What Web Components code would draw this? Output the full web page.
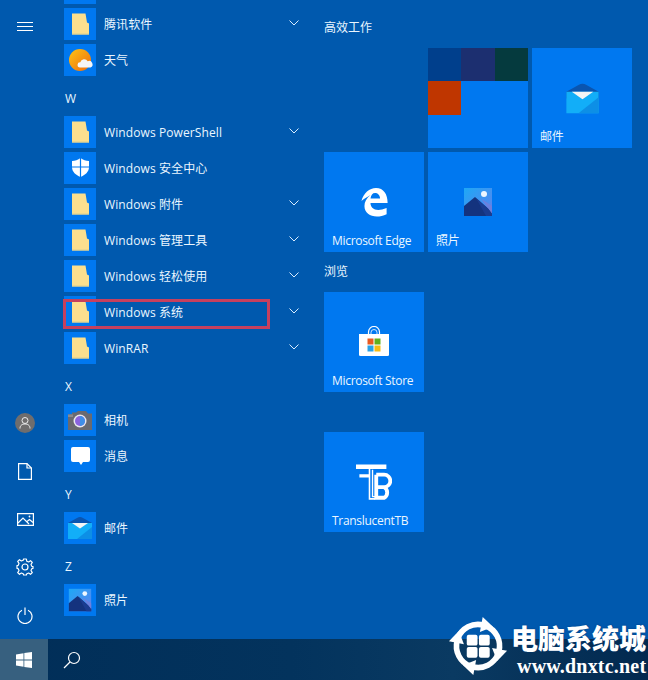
<!DOCTYPE html>
<html lang="zh">
<head>
<meta charset="utf-8">
<title>Start</title>
<style>
  html, body { margin: 0; height: 100%; overflow: hidden; }
  body {
    position: relative;
    display: flex;
    flex-direction: column;
    background: #0059ae;
    color: #eaf6ff;
    font: 12px "Open Sans", "Noto Sans CJK SC", sans-serif;
  }
  .menu { display: flex; height: 639px; }
  .tiles { padding-top: 8px; }
</style>
</head>
<body>
  <div class="menu">
    <sm-rail></sm-rail>
    <app-list>
      <div style="width:32px;height:4px;background:#0078f0;margin-bottom:4px"></div>
      <app-row icon="folder" more>腾讯软件</app-row>
      <app-row icon="weather">天气</app-row>
      <letter-head>W</letter-head>
      <app-row icon="folder" more>Windows PowerShell</app-row>
      <app-row icon="shield">Windows 安全中心</app-row>
      <app-row icon="folder" more>Windows 附件</app-row>
      <app-row icon="folder" more>Windows 管理工具</app-row>
      <app-row icon="folder" more>Windows 轻松使用</app-row>
      <app-row icon="folder" more marked>Windows 系统</app-row>
      <app-row icon="folder" more>WinRAR</app-row>
      <letter-head>X</letter-head>
      <app-row icon="camera">相机</app-row>
      <app-row icon="message">消息</app-row>
      <letter-head>Y</letter-head>
      <app-row icon="mail">邮件</app-row>
      <letter-head>Z</letter-head>
      <app-row icon="photos">照片</app-row>
    </app-list>
    <div class="tiles">
      <tile-group title="高效工作">
        <live-tile mosaic style="grid-column:2"></live-tile>
        <live-tile icon="mail" size="43" label="邮件"></live-tile>
        <live-tile icon="edge" size="31" label="Microsoft Edge"></live-tile>
        <live-tile icon="photos" size="40" label="照片"></live-tile>
      </tile-group>
      <tile-group title="浏览">
        <live-tile icon="store" size="32" label="Microsoft Store"></live-tile>
      </tile-group>
      <tile-group>
        <live-tile icon="tb" size="36" label="TranslucentTB"></live-tile>
      </tile-group>
    </div>
  </div>
  <task-bar></task-bar>
  <site-mark></site-mark>

<script>
(() => {
  // every icon is drawn on a 32x32 box, so rows and tiles can share them
  const icons = {
    folder: `<path d="M8 5.500H21.500L23 14.500L25 15.500V26.500H8Z" fill="#fbdf8e"/><path d="M8 25.500H25V26.500H8Z" fill="#d8cf92"/>`,
    weather: `<defs><linearGradient id="sun" x1="0" y1="0" x2="1" y2="1"><stop offset="0" stop-color="#fdc414"/><stop offset="1" stop-color="#ee6a0e"/></linearGradient></defs>
      <circle cx="16" cy="16" r="11" fill="url(#sun)"/>
      <path d="M16 23.500a2.600 2.600 0 0 1 .3-5.200 4 4 0 0 1 7.400-1 3.100 3.100 0 0 1 2.800 6.200Z" fill="#f4f6f8"/>`,
    shield: `<path d="M16.500 6C14 8 11 9 8 9V15C8 20 12 23 16.500 25C21 23 25 20 25 15V9C22 9 19 8 16.500 6Z" fill="#fff"/><path d="M16.500 6V25M8 15H25" stroke="#0078f0" stroke-width="1.200"/>`,
    camera: `<path d="M4 10.500L8 10V8.500H12L14 7H22L24 9.500H28V26H4Z" fill="#6a6a70"/><path d="M4 10.500H9V13H4Z" fill="#8a8a90"/>
      <circle cx="16" cy="17" r="6.500" fill="#e8e8f0"/><circle cx="16" cy="17" r="5" fill="#8a63e0"/><path d="M16 12a5 5 0 0 1 0 10Z" fill="#3f8fe8"/>`,
    message: `<path d="M9 7H24Q26 7 26 9V20Q26 22 24 22H19L17 25L15 22H9Q7 22 7 20V9Q7 7 9 7Z" fill="#fff"/>`,
    mail: `<path d="M4 11L13 6Q16 4 19 6L28 11V16H4Z" fill="#0a55b0"/><path d="M4 11H28V27H4Z" fill="#12aef8"/><path d="M28 27H13L28 15Z" fill="#0d8fe6"/><path d="M8 11H24L16 16.500Z" fill="#f5f5f5"/>`,
    photos: `<defs><linearGradient id="sky" x1="0" y1="0" x2="1" y2="1"><stop offset="0" stop-color="#1ea8f6"/><stop offset=".7" stop-color="#4a8df0"/><stop offset="1" stop-color="#7d6fe0"/></linearGradient></defs>
      <g transform="translate(16 16) scale(.8) translate(-16 -16)">
      <path d="M2 2H30V30H2Z" fill="url(#sky)"/><circle cx="22" cy="8" r="3" fill="#eef7ff"/>
      <path d="M2 30V20L13 11L30 26V30Z" fill="#14337e"/><path d="M19 12.500L30 20V28Z" fill="#6f7fdc" opacity=".9"/><path d="M14 12L26 22.500L30 28V30H24Z" fill="#1a3c90"/></g>`,
    edge: `<path transform="translate(2.500 1) scale(1.040)" fill="#fff" fill-rule="evenodd" d="M0 13C2 5 8 0 14.500 0C22 0 26 6 26 15H9C9 21 15 24 25 20V26C15 31 3 28 3 18C3 14 5 10 9 7C6 9 2 11 0 13ZM9 10.500H18.500C18.500 7 16 5 13.500 5C11 5 9.500 7 9 10.500Z"/>`,
    store: `<path d="M10.500 9V6a5.500 5.500 0 0 1 11 0V9" fill="none" stroke="#fff" stroke-width="1.200"/><path d="M13 9V6.500a3 3 0 0 1 6 0V9" fill="none" stroke="#fff" stroke-width=".800"/>
      <path d="M1 8H31V29Q31 30 29.500 30H2.500Q1 30 1 29Z" fill="#fff"/>
      <path d="M9.500 12.500H15.500V18.500H9.500Z" fill="#ea5a20"/><path d="M16.500 12.500H22.500V18.500H16.500Z" fill="#62b01c"/><path d="M9.500 19.500H15.500V25.500H9.500Z" fill="#2aa2e6"/><path d="M16.500 19.500H22.500V25.500H16.500Z" fill="#f8bc14"/>`,
    tb: `<path d="M0 .5H27V4.500H0ZM3 9H12V12H3Z" fill="#fff"/><path d="M12 4.500V31H17" fill="none" stroke="#fff" stroke-width="1.400"/><path d="M14.700 5V29H17" fill="none" stroke="#fff" stroke-width="1.200"/>
      <path d="M18 9.500H25a5.500 5.500 0 0 1 0 11H18M25 20.500a5.500 5.500 0 0 1 0 9.500H18V9.500" fill="none" stroke="#fff" stroke-width="3.400"/>`
  };

  const svg = (name, size) => `<svg width="${size}" height="${size}" viewBox="0 0 32 32">${icons[name]}</svg>`;


  // ****************************************************************************


  customElements.define('sm-rail',
    /**
     * The narrow column at the far left of the menu
     */
    class SmRail extends HTMLElement {
      constructor () {
        super();
        const line = 'fill="none" stroke="#fff" stroke-width="1.200"';
        this.attachShadow({ mode: 'open' }).innerHTML = `
          <style>
            :host { display: flex; flex-direction: column; justify-content: space-between; width: 48px; flex: none; }
            .top { padding-top: 3px; }
            .btn { display: flex; width: 50px; height: 48px; align-items: center; justify-content: center; }
            svg { display: block; }
          </style>
          <div class="top">
            <div class="btn"><svg width="16" height="10" viewBox="0 0 16 10"><path d="M0 .5H16M0 4.500H16M0 8.500H16" stroke="#fff"/></svg></div>
          </div>
          <div>
            <div class="btn"><svg width="22" height="22" viewBox="0 0 22 22"><circle cx="11" cy="11" r="10" fill="#6f6d6d"/><circle cx="11" cy="8.500" r="3" fill="none" stroke="#eee"/><path d="M6 16.500C6 13 8.500 12 11 12S16 13 16 16.500" fill="none" stroke="#eee"/></svg></div>
            <div class="btn"><svg width="14" height="17" viewBox="0 0 14 17"><path d="M.6.6H9L13.400 5V16.400H.6Z" ${line}/><path d="M9 .6V5H13.400" ${line} stroke-width="1"/></svg></div>
            <div class="btn"><svg width="17" height="13" viewBox="0 0 17 13"><path d="M.6.6H16.400V12.400H.6Z" ${line}/><path d="M1 10L6 5L12 11M10 8.500L12.500 6.500L16 9.500" ${line}/><circle cx="12.500" cy="3.500" r=".9" fill="#fff"/></svg></div>
            <div class="btn"><svg width="18" height="18" viewBox="0 0 18 18"><path d="M7.600 1H10.400L10.800 3.300L12.600 4L14.500 2.700L16.300 4.500L15 6.400L15.700 8.200L17 8.600V10.400L15.700 10.800L15 12.600L16.300 14.500L14.500 16.300L12.600 15L10.800 15.700L10.400 17H7.600L7.200 15.700L5.400 15L3.500 16.300L1.700 14.500L3 12.600L2.300 10.800L1 10.400V7.600L2.300 7.200L3 5.400L1.700 3.500L3.500 1.700L5.400 3L7.200 2.300Z" ${line} stroke-linejoin="round"/><circle cx="9" cy="9" r="3" ${line}/></svg></div>
            <div class="btn"><svg width="16" height="17" viewBox="0 0 16 17"><path d="M5 3.200A7 7 0 1 0 11 3.200" ${line}/><path d="M8 .5V8" ${line}/></svg></div>
          </div>
        `;
      }
    }
  );

  customElements.define('app-list',
    /**
     * Scrolled list of all apps
     */
    class AppList extends HTMLElement {
      constructor () {
        super();
        this.attachShadow({ mode: 'open' }).innerHTML = `
          <style>
            :host { display: block; box-sizing: border-box; width: 276px; flex: none; padding-left: 16px; }
          </style>
          <slot></slot>
        `;
      }
    }
  );

  customElements.define('letter-head',
    /**
     * Alphabet heading inside the list
     */
    class LetterHead extends HTMLElement {
      constructor () {
        super();
        this.attachShadow({ mode: 'open' }).innerHTML = `
          <style>
            :host { display: flex; height: 36px; align-items: center; padding-left: 1px; }
          </style>
          <slot></slot>
        `;
      }
    }
  );

  customElements.define('app-row',
    /**
     * One app in the list: icon, name and an optional chevron
     */
    class AppRow extends HTMLElement {
      constructor () {
        super();
        const more = this.hasAttribute('more')
          ? '<svg class="more" width="10" height="6" viewBox="0 0 10 6"><path d="M.5.5L5 5L9.500.5" fill="none" stroke="#d8ecff"/></svg>'
          : '';
        const mark = this.hasAttribute('marked') ? '<div class="mark"></div>' : '';
        this.attachShadow({ mode: 'open' }).innerHTML = `
          <style>
            :host { display: flex; position: relative; height: 32px; margin-bottom: 4px; align-items: center; letter-spacing: .1px; }
            .icon { width: 32px; height: 32px; margin-right: 8px; flex: none; background: #0078f0; }
            svg { display: block; }
            .more { margin-left: auto; margin-right: 25px; margin-top: -3px; }
            .mark { position: absolute; top: 3px; left: -1px; width: 201px; height: 24px; border: 3px solid #c6405e; }
          </style>
          <div class="icon">${svg(this.getAttribute('icon'), 32)}</div>
          <slot></slot>
          ${more}
          ${mark}
        `;
      }
    }
  );

  customElements.define('tile-group',
    /**
     * Titled block of tiles, three 100px columns
     */
    class TileGroup extends HTMLElement {
      constructor () {
        super();
        this.attachShadow({ mode: 'open' }).innerHTML = `
          <style>
            :host { display: block; }
            .head { height: 40px; box-sizing: border-box; padding-top: 11px; line-height: 18px; }
            .grid { display: grid; grid-template-columns: repeat(3, 100px); grid-auto-rows: 100px; gap: 4px; }
          </style>
          <div class="head">${this.getAttribute('title') || ''}</div>
          <div class="grid"><slot></slot></div>
        `;
      }
    }
  );

  customElements.define('live-tile',
    /**
     * A start tile, or the small folder mosaic when it has the mosaic attribute
     */
    class LiveTile extends HTMLElement {
      constructor () {
        super();
        const size = this.getAttribute('size');
        const inner = this.hasAttribute('mosaic')
          ? `<div class="mosaic"><i style="background:#003f8c"></i><i style="background:#1c2f70"></i><i style="background:#053a3e"></i><i style="background:#bf3600"></i></div>`
          : `${svg(this.getAttribute('icon'), size)}<span>${this.getAttribute('label')}</span>`;
        this.attachShadow({ mode: 'open' }).innerHTML = `
          <style>
            :host { display: grid; background: #0078f0; place-items: center; }
            svg { display: block; grid-area: 1 / 1; }
            span { grid-area: 1 / 1; align-self: end; justify-self: start; padding: 0 0 2px 8px; line-height: 18px; white-space: nowrap; letter-spacing: -.3px; }
            .mosaic { grid-area: 1 / 1; display: grid; width: 100%; height: 100%; grid-template-columns: repeat(3, 1fr); grid-template-rows: repeat(3, 1fr); }
          </style>
          ${inner}
        `;
      }
    }
  );

  customElements.define('task-bar',
    /**
     * Taskbar with start button and search
     */
    class TaskBar extends HTMLElement {
      constructor () {
        super();
        this.attachShadow({ mode: 'open' }).innerHTML = `
          <style>
            :host { display: flex; height: 41px; flex: none; background: linear-gradient(90deg, #012e58 0, #03335d 45%, #0a3a62 70%, #02294f 100%); }
            .start { display: flex; width: 48px; align-items: center; justify-content: center; background: #37607f; }
            .search { display: flex; width: 48px; align-items: center; justify-content: center; }
          </style>
          <div class="start"><svg width="16" height="16" viewBox="0 0 16 16"><path d="M0 2.400L7.500 1.200V7.600H0ZM8.300 1.100L16 0V7.600H8.300ZM0 8.400H7.500V14.800L0 13.600ZM8.300 8.400H16V16L8.300 14.900Z" fill="#fff"/></svg></div>
          <div class="search"><svg width="18" height="18" viewBox="0 0 18 18"><circle cx="11" cy="7" r="5.500" fill="none" stroke="#fff" stroke-width="1.200"/><path d="M7 11L1 17" stroke="#fff" stroke-width="1.300"/></svg></div>
        `;
      }
    }
  );

  customElements.define('site-mark',
    /**
     * Watermark of the source site, lies over the bottom right corner
     */
    class SiteMark extends HTMLElement {
      constructor () {
        super();
        const arc = `<path d="M10.400 24.100A23 23 0 0 1 38 9.800" fill="none" stroke="#fff" stroke-width="6"/><path d="M37 1L48 11.500L34 17Z" fill="#fff"/>`;
        this.attachShadow({ mode: 'open' }).innerHTML = `
          <style>
            :host { position: absolute; left: 448px; top: 614px; display: flex; width: 200px; height: 66px; color: #fff; }
            svg { display: block; flex: none; margin-right: 3px; }
            .text { display: flex; flex-direction: column; padding-top: 11px; white-space: nowrap; }
            .name { font: 900 27px/30px "Liberation Sans", "Noto Sans CJK SC", sans-serif; text-shadow: 0 0 2px #003a78; }
            .url { font: bold 20px/23px "Liberation Serif", serif; margin-left: 6px; letter-spacing: .2px; }
          </style>
          <svg width="60" height="64" viewBox="0 0 64 64">
            ${arc}
            <g transform="rotate(90 32 32)">${arc}</g>
            <g transform="rotate(180 32 32)">${arc}</g>
            <g transform="rotate(270 32 32)">${arc}</g>
            <rect x="20" y="20" width="11.500" height="11.500" rx="2" fill="#fff"/>
            <rect x="33" y="20" width="11.500" height="11.500" rx="2" fill="#fff"/>
            <rect x="20" y="33" width="11.500" height="11.500" rx="2" fill="#fff"/>
            <rect x="33" y="33" width="11.500" height="11.500" rx="2" fill="#fff"/>
          </svg>
          <div class="text">
            <div class="name">电脑系统城</div>
            <div class="url">www.dnxtc.net</div>
          </div>
        `;
      }
    }
  );
})();
</script>
</body>
</html>
